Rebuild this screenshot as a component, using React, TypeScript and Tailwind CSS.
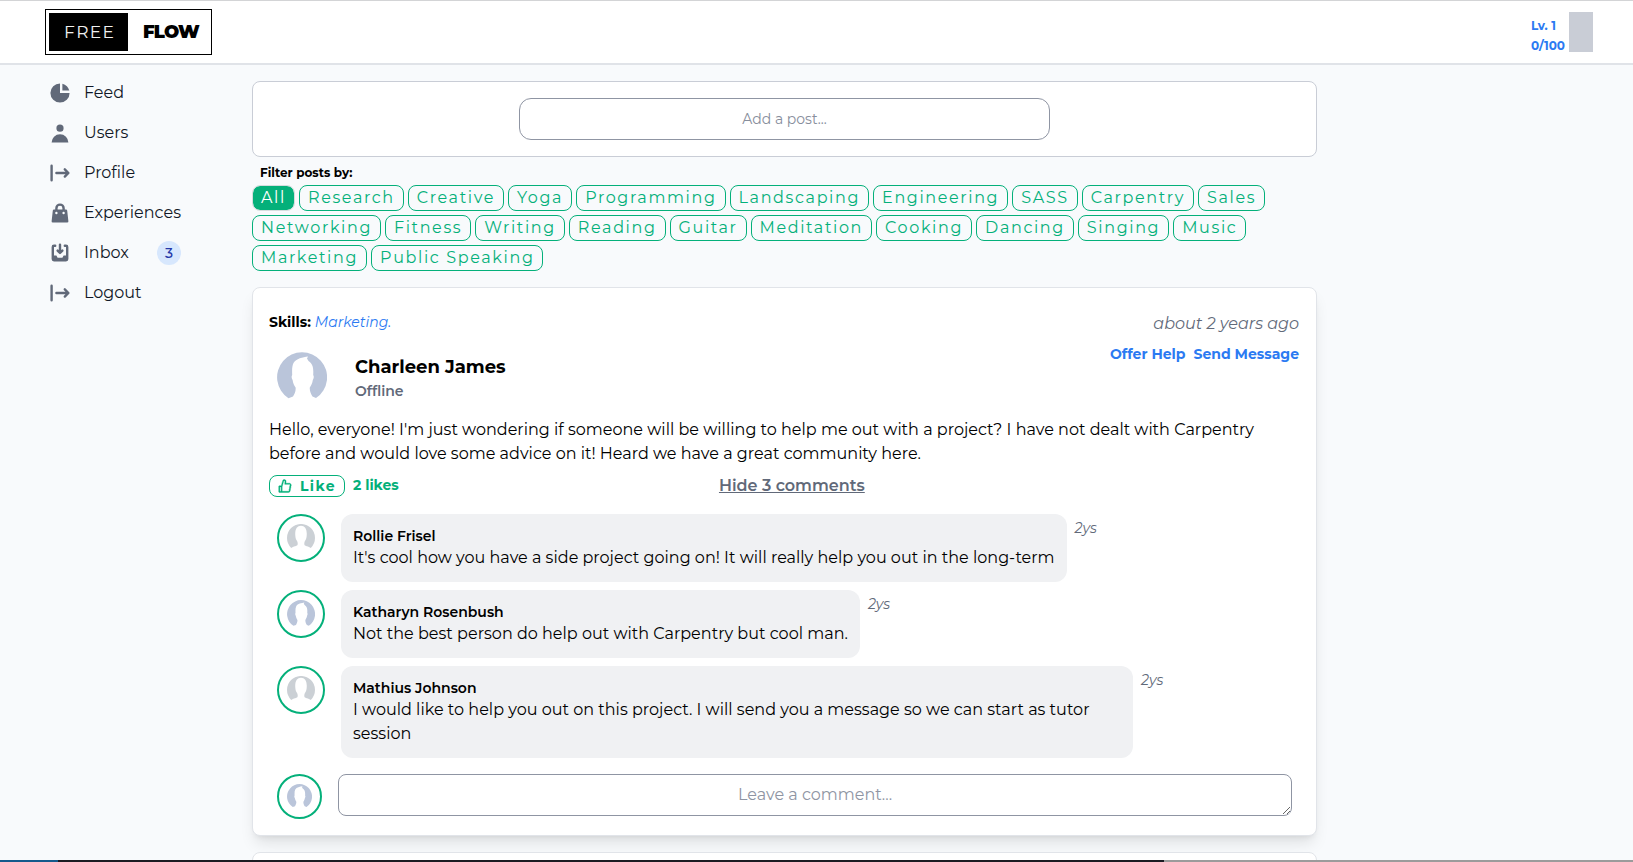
import React from "react";
import { AiOutlineLike } from "react-icons/ai";

const skills = [
  "Research", "Creative", "Yoga", "Programming", "Landscaping", "Engineering", "SASS",
  "Carpentry", "Sales", "Networking", "Fitness", "Writing", "Reading", "Guitar",
  "Meditation", "Cooking", "Dancing", "Singing", "Music", "Marketing", "Public Speaking",
];

const signIn = [
  "M3 3a1 1 0 00-1 1v12a1 1 0 102 0V4a1 1 0 00-1-1zm10.293 9.293a1 1 0 001.414 1.414l3-3a1 1 0 000-1.414l-3-3a1 1 0 10-1.414 1.414L14.586 9H7a1 1 0 100 2h7.586l-1.293 1.293z",
];

const navItems: { label: string; paths: string[]; badge?: number }[] = [
  {
    label: "Feed",
    paths: ["M2 10a8 8 0 018-8v8h8a8 8 0 11-16 0z", "M12 2.252A8.014 8.014 0 0117.748 8H12V2.252z"],
  },
  { label: "Users", paths: ["M10 9a3 3 0 100-6 3 3 0 000 6zm-7 9a7 7 0 1114 0H3z"] },
  { label: "Profile", paths: signIn },
  {
    label: "Experiences",
    paths: [
      "M10 2a4 4 0 00-4 4v1H5a1 1 0 00-.994.89l-1 9A1 1 0 004 18h12a1 1 0 00.994-1.11l-1-9A1 1 0 0015 7h-1V6a4 4 0 00-4-4zm2 5V6a2 2 0 10-4 0v1h4zm-6 3a1 1 0 112 0 1 1 0 01-2 0zm7-1a1 1 0 100 2 1 1 0 000-2z",
    ],
  },
  {
    label: "Inbox",
    badge: 3,
    paths: [
      "M8.707 7.293a1 1 0 00-1.414 1.414l2 2a1 1 0 001.414 0l2-2a1 1 0 00-1.414-1.414L11 7.586V3a1 1 0 10-2 0v4.586l-.293-.293z",
      "M3 5a2 2 0 012-2h1a1 1 0 010 2H5v7h2l1 2h4l1-2h2V5h-1a1 1 0 110-2h1a2 2 0 012 2v10a2 2 0 01-2 2H5a2 2 0 01-2-2V5z",
    ],
  },
  { label: "Logout", paths: signIn },
];

type AvatarKind = "blue" | "gray";

const comments: { name: string; text: string; avatar: AvatarKind }[] = [
  {
    name: "Rollie Frisel",
    text: "It's cool how you have a side project going on! It will really help you out in the long-term",
    avatar: "gray",
  },
  {
    name: "Katharyn Rosenbush",
    text: "Not the best person do help out with Carpentry but cool man.",
    avatar: "blue",
  },
  {
    name: "Mathius Johnson",
    text: "I would like to help you out on this project. I will send you a message so we can start as tutor session",
    avatar: "gray",
  },
];

function Silhouette({ kind, className }: { kind: AvatarKind; className: string }) {
  return (
    <svg viewBox="0 0 50 50" className={className}>
      {kind === "blue" ? (
        <path
          fill="#bac5da"
          d="M11.5 46.2A25 25 0 1 1 39 46L35.5 44.5C34 42 32.5 39 32.8 35.5C34 33.5 35.5 31 35.8 28C36.8 26.5 37.2 24.5 36.2 23C36.6 16 36 12 31.5 9L30 6.5L31 4.5C26 5.2 19 6.5 16.5 11C15 14 15 18 15.2 23C14.2 24.5 14.6 26.5 15.6 28C16 31 17.2 33.5 18.6 35.5C19 39 17.5 42 16 44.5Z"
        />
      ) : (
        <path
          fill="#cbd0d5"
          d="M7.5 42.8A25 25 0 1 1 42.5 42.8C39 39.5 31.5 40 31 36.5C30.6 34 31.2 32 32.3 30C34 27.5 35 24.5 35.2 20C36 9 32 3 25 3C18 3 14 9 14.8 20C15 24.5 16 27.5 17.7 30C18.8 32 19.4 34 19 36.5C18.5 40 11 39.5 7.5 42.8Z"
        />
      )}
    </svg>
  );
}

function Header() {
  return (
    <header className="flex h-[65px] items-start justify-between border-t border-b-2 border-t-[#d3d4d6] border-b-[#e0e3e8] bg-white pr-10 pl-[45px]">
      <a className="mt-2 flex h-[46px] w-[167px] border border-black p-[3px] text-lg leading-[38px]">
        <span className="w-[79px] bg-black pl-[15px] text-[17px] font-normal tracking-[1.4px] text-[#f0f0f0]">FREE</span>
        <span className="flex-1 pl-[15px] font-black tracking-[-0.8px] text-black">FLOW</span>
      </a>
      <div className="mt-[11px] flex gap-1 text-xs leading-5 font-bold text-[#2b7af2]">
        <div className="pt-1">
          <div>Lv. 1</div>
          <div>0/100</div>
        </div>
        <div className="h-10 w-6 bg-[#c9cdd6]" />
      </div>
    </header>
  );
}

function Sidebar() {
  return (
    <nav className="w-[252px] shrink-0 pt-2 pl-10">
      <ul className="w-fit">
        {navItems.map((item) => (
          <li key={item.label} className="flex items-center p-2">
            <svg viewBox="0 0 20 20" fill="#616979" fillRule="evenodd" clipRule="evenodd" className="size-6">
              {item.paths.map((d) => (
                <path key={d} d={d} />
              ))}
            </svg>
            <span className="ml-3 flex-1 text-base text-[#111827]">{item.label}</span>
            {item.badge && (
              <span className="ml-3 flex size-6 items-center justify-center rounded-full bg-[#d7e7fd] text-sm font-medium text-[#2338a8]">
                {item.badge}
              </span>
            )}
          </li>
        ))}
      </ul>
    </nav>
  );
}

function Filters() {
  return (
    <section>
      <h2 className="mt-2 ml-2 text-xs leading-4 font-bold tracking-[0.02px]">Filter posts by:</h2>
      <div className="mt-1 flex flex-wrap gap-1 text-base leading-6 text-[#04b07a]">
        <button className="h-[26px] rounded-lg border border-[#d5ddde] bg-[#04b07a] bg-clip-padding px-2 leading-6 tracking-[1.62px] text-white">
          All
        </button>
        {skills.map((skill) => (
          <button key={skill} className="h-[26px] rounded-lg border border-[#04b07a] px-2 leading-6 tracking-[1.62px]">
            {skill}
          </button>
        ))}
      </div>
    </section>
  );
}

function Comment({ name, text, avatar }: { name: string; text: string; avatar: AvatarKind }) {
  return (
    <li className="flex items-start">
      <div className="flex size-12 shrink-0 justify-center rounded-full border-2 border-[#04b07a] pt-2">
        <Silhouette kind={avatar} className="size-7" />
      </div>
      <div className="ml-4 max-w-[792px] rounded-xl bg-[#f0f1f3] p-3">
        <h4 className="text-sm leading-5 font-semibold">{name}</h4>
        <p className="text-base leading-6 tracking-[0.014px]">{text}</p>
      </div>
      <span className="mt-1 ml-2 text-sm leading-5 text-[#616979] italic">2ys</span>
    </li>
  );
}

function Post() {
  return (
    <article className="mt-4 h-[549px] rounded-lg border border-[#e1e4e9] bg-white px-4 pt-6 shadow-lg">
      <div className="flex h-[100px] justify-between pr-px">
        <div>
          <div className="flex gap-1 text-sm leading-5">
            <span className="font-bold">Skills:</span>
            <span className="text-[#2b7af2] italic">Marketing.</span>
          </div>
          <div className="mt-5 ml-2 flex">
            <Silhouette kind="blue" className="size-[50px]" />
            <div className="ml-7">
              <h3 className="text-lg leading-[30px] font-bold">Charleen James</h3>
              <p className="-mt-px text-sm leading-5 font-semibold text-[#616979]">Offline</p>
            </div>
          </div>
        </div>
        <div className="text-right">
          <p className="text-base leading-6 text-[#616979] italic">about 2 years ago</p>
          <div className="mt-2 flex justify-end gap-2 text-sm leading-5 font-bold text-[#2b7af2]">
            <a>Offer Help</a>
            <a>Send Message</a>
          </div>
        </div>
      </div>
      <p className="mt-1.5 text-base leading-6 tracking-[0.014px]">
        Hello, everyone! I'm just wondering if someone will be willing to help me out with a project? I have not dealt
        with Carpentry before and would love some advice on it! Heard we have a great community here.
      </p>
      <div className="mt-[9px] flex h-[22px]">
        <button className="flex h-[22px] items-center gap-[7px] rounded-lg border border-[#04b07a] px-[7px] pr-2 text-sm font-bold tracking-widest text-[#04b07a]">
          <AiOutlineLike className="size-4" strokeWidth={24} />
          Like
        </button>
        <span className="ml-2 w-[366px] text-sm leading-5 font-bold text-[#04b07a]">2 likes</span>
        <a className="text-base leading-[22px] font-semibold text-[#616979] underline">Hide 3 comments</a>
      </div>
      <ul className="mt-[17px] ml-2 flex flex-col gap-2">
        {comments.map((comment) => (
          <Comment key={comment.name} {...comment} />
        ))}
      </ul>
      <div className="mt-4 flex items-start pr-2 pl-2">
        <div className="flex size-[45px] shrink-0 justify-center rounded-full border-2 border-[#04b07a] pt-2">
          <Silhouette kind="blue" className="size-[25px]" />
        </div>
        <textarea
          rows={1}
          placeholder="Leave a comment..."
          className="ml-4 h-[42px] flex-1 resize rounded-lg border border-[#8f95a3] px-3 py-2 text-center text-base leading-6 placeholder:text-[#8f95a3]"
        />
      </div>
    </article>
  );
}

export default function App() {
  return (
    <div className="flex h-[862px] flex-col overflow-hidden bg-[#f8fafc] font-['Montserrat',Inter,sans-serif] text-black">
      <Header />
      <div className="flex h-[795px] overflow-hidden">
        <Sidebar />
        <main className="w-[1065px] pt-4">
          <div className="flex h-[76px] items-center justify-center rounded-lg border border-[#c9cdd6] bg-white">
            <input
              placeholder="Add a post..."
              className="h-[42px] w-[531px] rounded-xl border border-[#8f95a3] text-center text-sm placeholder:text-[#878e9c]"
            />
          </div>
          <Filters />
          <Post />
          <article className="mt-4 h-20 rounded-lg border border-[#e1e4e9] bg-white" />
        </main>
      </div>
      <footer className="flex h-[2px]">
        <div className="w-[58px] bg-[#145a8c]" />
        <div className="w-[1106px] bg-[#1b1b22]" />
        <div className="flex-1 bg-[#9b9b9b]" />
      </footer>
    </div>
  );
}
